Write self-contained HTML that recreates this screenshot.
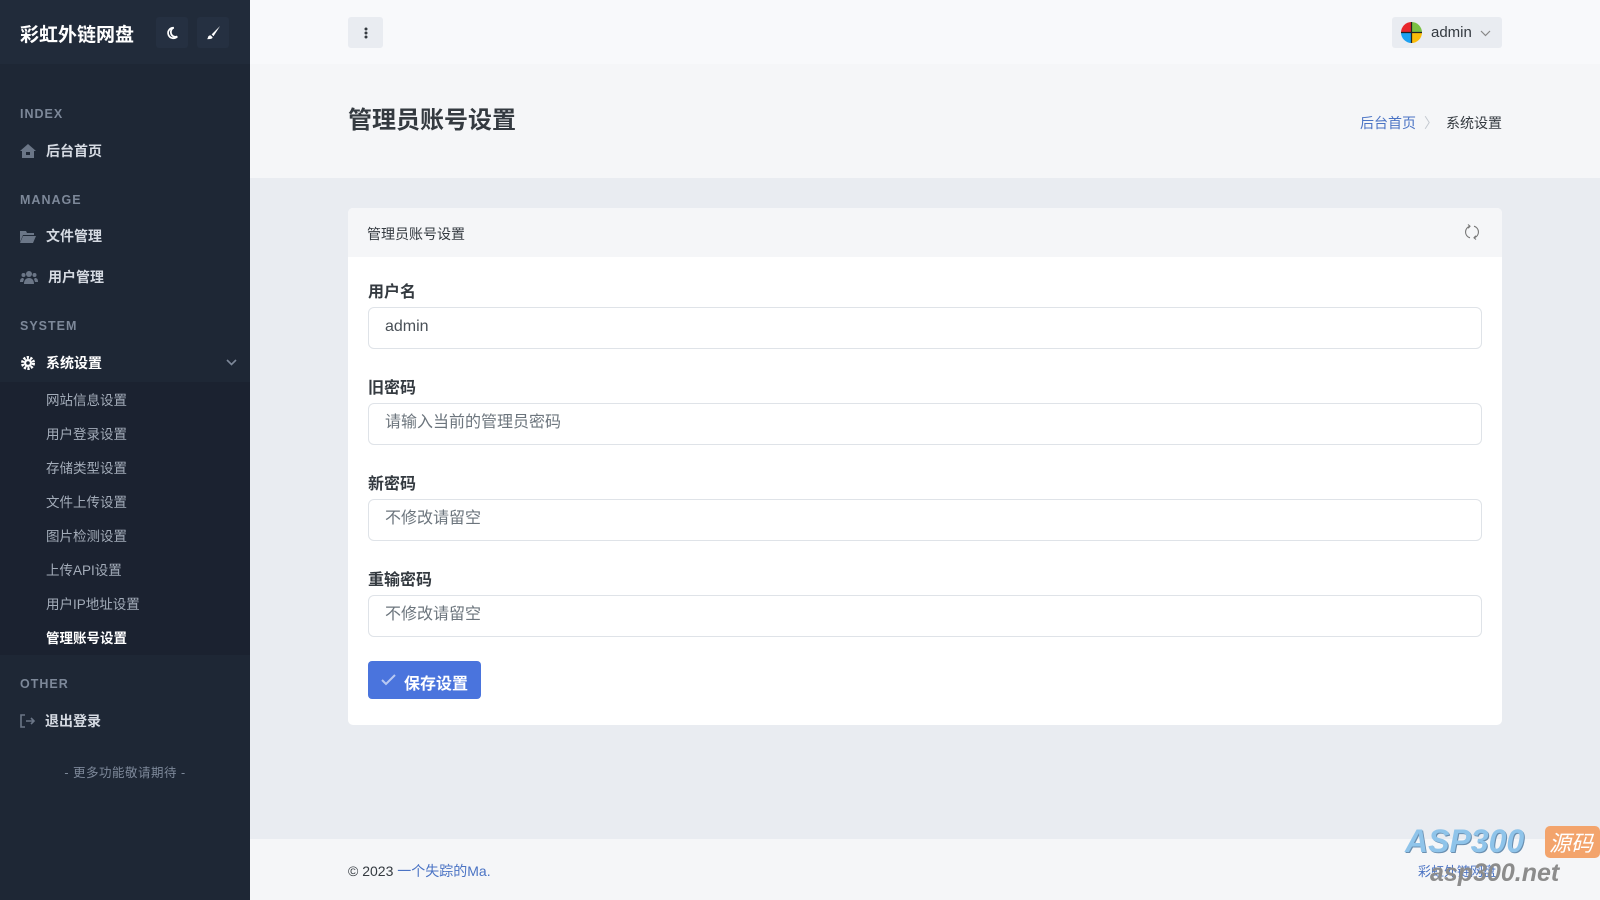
<!DOCTYPE html><html><head><meta charset="utf-8"><style>
*{box-sizing:border-box;margin:0;padding:0}
body{width:1600px;height:900px;overflow:hidden;font-family:"Liberation Sans","Noto Sans CJK SC",sans-serif;background:#e9ecf1;position:relative;color:#343a40}
.sb{position:absolute;left:0;top:0;width:250px;height:900px;background:#1e2735}
.sbh{height:64px;background:#212b3a;position:relative}
.logo{position:absolute;left:20px;top:20px;font-size:19px;font-weight:bold;color:#fff}
.ib{position:absolute;top:17px;width:32px;height:31px;background:#253041;border-radius:3px;color:#fff;display:flex;align-items:center;justify-content:center}
.h{position:absolute;left:20px;font-size:12.5px;font-weight:bold;letter-spacing:1px;color:#7d8899}
.it{position:absolute;left:20px;font-size:14px;font-weight:bold;color:#d5dae2;display:flex;align-items:center}
.it svg{margin-right:10px}
.sub{position:absolute;left:0;top:382px;width:250px;height:273px;background:#1b2230}
.si{position:absolute;left:46px;font-size:13.5px;color:#a3acb9}
.top{position:absolute;left:250px;top:0;right:0;height:64px;background:#f8f9fb}
.ttl{position:absolute;left:250px;top:64px;right:0;height:114px;background:#f5f6f8}
.card{position:absolute;left:348px;top:208px;width:1154px;height:517px;background:#fff;border-radius:5px;overflow:hidden}
.ch{height:49px;background:#f5f6f8;font-size:14px;padding:16px 19px;color:#343a40}
.lb{position:absolute;left:20px;font-size:16px;font-weight:bold;color:#343a40}
.in{position:absolute;left:20px;width:1114px;height:42px;border:1px solid #dfe3e8;border-radius:6px;font-size:16px;line-height:38px;padding:0 16px;color:#6c757d}
.ft{position:absolute;left:250px;top:839px;right:0;height:61px;background:#f5f6f8}
</style></head><body>
<div class="sb">
<div class="sbh"><div class="logo">彩虹外链网盘</div>
<div class="ib" style="left:156px"><svg width="14" height="14" viewBox="0 0 16 16"><path d="M10 2a6 6 0 1 0 4 10A5 5 0 0 1 10 2z" fill="none" stroke="#fff" stroke-width="2"/></svg></div>
<div class="ib" style="left:197px"><svg width="15" height="15" viewBox="0 0 16 16"><path d="M15 1L6 10l2 2 7-11zM5 11c-2 0-3 1-3 3l-1 1c3 0 6 0 6-2z" fill="#fff"/></svg></div></div>
<div class="h" style="top:107px">INDEX</div>
<div class="it" style="top:141px"><svg width="16" height="14" viewBox="0 0 16 14"><path d="M8 0L0 7h2v7h12V7h2z" fill="#6b7687"/><rect x="6" y="8" width="4" height="3" fill="#1e2735"/></svg>后台首页</div>
<div class="h" style="top:193px">MANAGE</div>
<div class="it" style="top:226px"><svg width="16" height="13" viewBox="0 0 16 13"><path d="M0 1h6l1 2h7v2H3L0 12zM3 6h13l-3 7H0z" fill="#6b7687"/></svg>文件管理</div>
<div class="it" style="top:267px"><svg width="18" height="14" viewBox="0 0 18 14"><circle cx="9" cy="4" r="3" fill="#6b7687"/><circle cx="3.5" cy="5" r="2" fill="#6b7687"/><circle cx="14.5" cy="5" r="2" fill="#6b7687"/><path d="M4 14c0-4 2-6 5-6s5 2 5 6zM0 12c0-3 1-4 3-4l1 1-1 3zM18 12c0-3-1-4-3-4l-1 1 1 3z" fill="#6b7687"/></svg>用户管理</div>
<div class="h" style="top:319px">SYSTEM</div>
<div class="it" style="top:353px;color:#fff"><svg width="16" height="16" viewBox="0 0 16 16"><circle cx="8" cy="8" r="5.5" fill="none" stroke="#fff" stroke-width="3" stroke-dasharray="2.2 1.3"/><circle cx="8" cy="8" r="4" fill="#fff"/><circle cx="8" cy="8" r="1.8" fill="#1e2735"/></svg>系统设置</div>
<svg style="position:absolute;left:226px;top:359px" width="11" height="7" viewBox="0 0 11 7"><path d="M1 1l4.5 4.5L10 1" fill="none" stroke="#7d8899" stroke-width="1.6"/></svg>
<div class="sub"></div>
<div class="si" style="top:389px">网站信息设置</div><div class="si" style="top:423px">用户登录设置</div><div class="si" style="top:457px">存储类型设置</div><div class="si" style="top:491px">文件上传设置</div><div class="si" style="top:525px">图片检测设置</div><div class="si" style="top:559px">上传API设置</div><div class="si" style="top:593px">用户IP地址设置</div><div class="si" style="top:627px;color:#fff;font-weight:bold">管理账号设置</div>
<div class="h" style="top:677px">OTHER</div>
<div class="it" style="top:711px"><svg width="15" height="14" viewBox="0 0 15 14"><path d="M5 1H1v12h4M6 7h8M11 4l3 3-3 3" fill="none" stroke="#6b7687" stroke-width="1.6"/></svg>退出登录</div>
<div style="position:absolute;left:0;width:250px;top:762px;text-align:center;font-size:12.5px;color:#7d8899;letter-spacing:0.5px">- 更多功能敬请期待 -</div>
</div>
<div class="top">
<div style="position:absolute;left:98px;top:17px;width:35px;height:31px;background:#e9ecf1;border-radius:3px;display:flex;align-items:center;justify-content:center"><svg width="4" height="12"><circle cx="2" cy="2" r="1.5" fill="#343a40"/><circle cx="2" cy="6" r="1.5" fill="#343a40"/><circle cx="2" cy="10" r="1.5" fill="#343a40"/></svg></div>
<div style="position:absolute;left:1142px;top:17px;width:110px;height:31px;background:#e9ecf1;border-radius:3px">
<svg style="position:absolute;left:9px;top:5px" width="21" height="21" viewBox="0 0 20 20"><path d="M10 10V0A10 10 0 0 0 0 10z" fill="#e8262b"/><path d="M10 10V0a10 10 0 0 1 10 10z" fill="#7ac143"/><path d="M10 10H0a10 10 0 0 0 10 10z" fill="#1ea1f1"/><path d="M10 10h10a10 10 0 0 1-10 10z" fill="#fbbc09"/><path d="M10 0v20M0 10h20" stroke="#222" stroke-width="1.2"/></svg>
<span style="position:absolute;left:39px;top:7px;font-size:15px;color:#343a40">admin</span>
<svg style="position:absolute;left:88px;top:13px" width="11" height="7"><path d="M1 1l4.5 4.5L10 1" fill="none" stroke="#888" stroke-width="1.2"/></svg></div>
</div>
<div class="ttl">
<div style="position:absolute;left:98px;top:36px;font-size:24px;font-weight:bold;color:#343a40">管理员账号设置</div>
<div style="position:absolute;right:98px;top:49px;font-size:14px;color:#343a40"><span style="color:#4a73c4">后台首页</span><span style="color:#c4c9d0;margin:0 8px">〉</span>系统设置</div>
</div>
<div class="card">
<div class="ch">管理员账号设置</div>
<svg style="position:absolute;right:22px;top:15px" width="16" height="18" viewBox="0 0 16 18"><path d="M6 3.2A6 6 0 0 0 6 14.8M10 3.2a6 6 0 0 1 0 11.6M4 1.5l2 1.7-1.8 2M12 16.5l-2-1.7 1.8-2" fill="none" stroke="#777" stroke-width="1.1"/></svg>
<div class="lb" style="top:70px">用户名</div><div class="in" style="top:99px;color:#495057">admin</div>
<div class="lb" style="top:166px">旧密码</div><div class="in" style="top:195px">请输入当前的管理员密码</div>
<div class="lb" style="top:262px">新密码</div><div class="in" style="top:291px">不修改请留空</div>
<div class="lb" style="top:358px">重输密码</div><div class="in" style="top:387px">不修改请留空</div>
<div style="position:absolute;left:20px;top:453px;width:113px;height:38px;background:#4a74dd;border-radius:4px;color:#fff;font-size:16px;font-weight:bold;padding:9px 0 0 36px"><svg style="position:absolute;left:13px;top:13px" width="15" height="12"><path d="M1 6l4 4 9-9" fill="none" stroke="#b8c9f2" stroke-width="2"/></svg>保存设置</div>
</div>
<div class="ft"><div style="position:absolute;left:98px;top:22px;font-size:14px;color:#343a40">© 2023 <span style="color:#4a73c4">一个失踪的Ma.</span></div>
<div style="position:absolute;left:1168px;top:22px;font-size:13px;color:#4a73c4">彩虹外链网盘</div></div>
<div style="position:absolute;left:1405px;top:823px;font-size:32px;font-style:italic;font-weight:bold;color:#8fc4ea;text-shadow:1px 1px 0 #6a8fb0">ASP300</div>
<div style="position:absolute;left:1545px;top:826px;width:55px;height:32px;background:#f3a46c;border-radius:5px;color:#fff;font-size:22px;font-style:italic;padding-left:4px">源码</div>
<div style="position:absolute;left:1430px;top:859px;font-size:25px;font-style:italic;font-weight:bold;color:#8c8c8c">asp300.net</div>
</body></html>
